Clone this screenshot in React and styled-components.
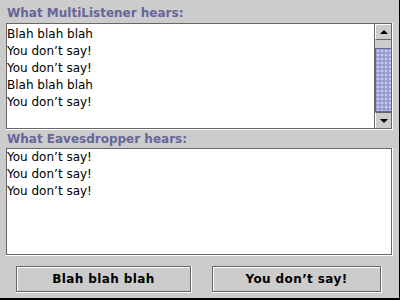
import styled, { createGlobalStyle } from "styled-components";

const Global = createGlobalStyle`
  html, body {
    margin: 0;
    padding: 0;
    background: #cccccc;
  }
`;

const Frame = styled.div`
  width: 400px;
  height: 300px;
  box-sizing: border-box;
  background: #cccccc;
  border-right: 1px solid #000;
  border-bottom: 2px solid #000;
  padding: 4px 6px 0 6px;
  display: flex;
  flex-direction: column;
  font-family: "DejaVu Sans", "Liberation Sans", sans-serif;
`;

const Label = styled.div`
  height: ${(p) => p.$h}px;
  font-size: 12px;
  font-weight: bold;
  line-height: 18px;
  color: #666699;
  padding-left: 1px;
  white-space: nowrap;
`;

// Metal etched border: dark rect outside, white highlight offset by one
const Etched = styled.div`
  box-sizing: border-box;
  height: ${(p) => p.$h}px;
  border-right: 1px solid #ffffff;
  border-bottom: 1px solid #ffffff;
  display: flex;
`;

const Pane = styled.div`
  flex: 1;
  display: flex;
  border: 1px solid #666666;
  background: #ffffff;
  overflow: hidden;
`;

const TextArea = styled.div`
  flex: 1;
  padding-top: ${(p) => p.$top}px;
  font-size: 12px;
  line-height: 17px;
  color: #000;
  white-space: pre;
`;

const ScrollBar = styled.div`
  width: 16px;
  display: flex;
  flex-direction: column;
  background: #cccccc;
  border-left: 1px solid #666666;
`;

const ArrowButton = styled.div`
  height: 16px;
  box-sizing: border-box;
  border-top: ${(p) => (p.$down ? "1px solid #666666" : "1px solid #ffffff")};
  border-left: 1px solid #ffffff;
  border-bottom: ${(p) => (p.$down ? "none" : "1px solid #666666")};
  background: #cccccc;
  display: flex;
  align-items: center;
  justify-content: center;
`;

const Triangle = styled.div`
  width: 0;
  height: 0;
  border-left: 4px solid transparent;
  border-right: 4px solid transparent;
  ${(p) =>
    p.$down ? "border-top: 4px solid #000;" : "border-bottom: 4px solid #000;"}
`;

const Track = styled.div`
  flex: 1;
  display: flex;
  flex-direction: column;
  padding-top: 8px;
`;

const Thumb = styled.div`
  flex: 1;
  box-sizing: border-box;
  border: 1px solid #666699;
  border-right: none;
  background-color: #a4a4d6;
  background-image: radial-gradient(circle, #d8d8ff 0.6px, transparent 0.9px),
    radial-gradient(circle, #7777aa 0.5px, transparent 0.8px);
  background-size: 4px 4px, 4px 4px;
  background-position: 0 0, 2px 2px;
`;

const ButtonRow = styled.div`
  display: flex;
  gap: 20px;
  margin-top: 10px;
  padding-left: 10px;
`;

const ButtonOuter = styled.div`
  width: ${(p) => p.$w}px;
  height: 27px;
  box-sizing: border-box;
  border-right: 1px solid #ffffff;
  border-bottom: 1px solid #ffffff;
  display: flex;
`;

const Button = styled.button`
  flex: 1;
  margin: 0;
  padding: 0;
  border: 1px solid #666666;
  box-shadow: inset 1px 1px 0 #ffffff;
  background: #cccccc;
  font-family: "DejaVu Sans", "Liberation Sans", sans-serif;
  font-size: 12px;
  font-weight: bold;
  color: #000;
  letter-spacing: 0.4px;
  cursor: pointer;
`;

const upper = [
  "Blah blah blah",
  "You don\u2019t say!",
  "You don\u2019t say!",
  "Blah blah blah",
  "You don\u2019t say!",
];

const lower = ["You don\u2019t say!", "You don\u2019t say!", "You don\u2019t say!"];

const App = () => {
  return (
    <>
      <Global />
      <Frame>
        <Label $h={19}>What MultiListener hears:</Label>
        <Etched $h={107}>
          <Pane>
            <TextArea $top={2}>{upper.join("\n")}</TextArea>
            <ScrollBar>
              <ArrowButton>
                <Triangle />
              </ArrowButton>
              <Track>
                <Thumb />
              </Track>
              <ArrowButton $down>
                <Triangle $down />
              </ArrowButton>
            </ScrollBar>
          </Pane>
        </Etched>
        <Label $h={18}>What Eavesdropper hears:</Label>
        <Etched $h={108}>
          <Pane>
            <TextArea $top={0}>{lower.join("\n")}</TextArea>
          </Pane>
        </Etched>
        <ButtonRow>
          <ButtonOuter $w={176}>
            <Button>Blah blah blah</Button>
          </ButtonOuter>
          <ButtonOuter $w={170}>
            <Button>You don’t say!</Button>
          </ButtonOuter>
        </ButtonRow>
      </Frame>
    </>
  );
};

export default App;
